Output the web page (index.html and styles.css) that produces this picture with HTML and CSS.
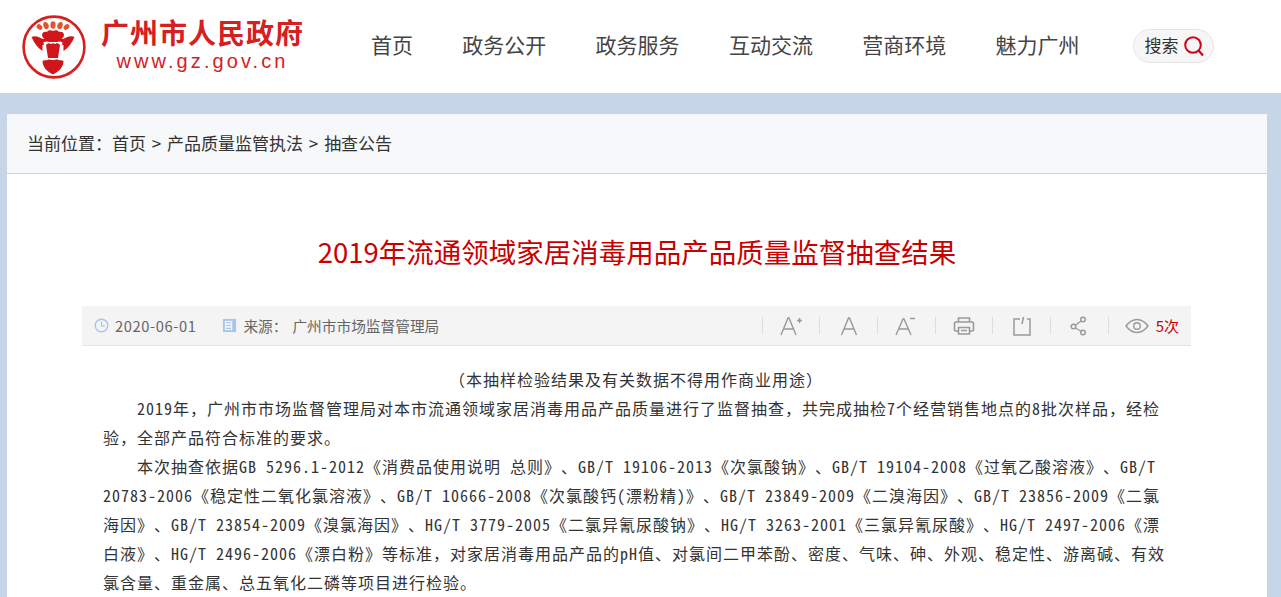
FILE: index.html
```html
<!DOCTYPE html>
<html lang="zh-CN">
<head>
    <meta charset="UTF-8">
    <meta name="viewport" content="width=device-width, initial-scale=1.0">
    <title>2019年流通领域家居消毒用品产品质量监督抽查结果</title>
    <link rel="stylesheet" href="styles.css">
</head>
<body>
    <header class="top">
        <a class="logo" href="#">
            <svg class="emblem" viewBox="0 0 64 64" width="64" height="64">
                <circle cx="32" cy="32" r="30.4" fill="none" stroke="#d5201f" stroke-width="2.6"/>
                <g fill="#e0552c">
                    <ellipse cx="17.5" cy="12" rx="2.4" ry="3.2" transform="rotate(-50 17.5 12)"/>
                    <ellipse cx="24" cy="10.5" rx="2.6" ry="3.6" transform="rotate(-20 24 10.5)"/>
                    <ellipse cx="31" cy="10" rx="2.6" ry="3.8"/>
                    <ellipse cx="38" cy="10.5" rx="2.6" ry="3.6" transform="rotate(20 38 10.5)"/>
                    <ellipse cx="44.5" cy="12" rx="2.4" ry="3.2" transform="rotate(50 44.5 12)"/>
                </g>
                <g fill="#d0161a">
                    <path d="M20 20c0-3 3-4 5-3 1-2 4-2 6-1 2-1 5-1 6 1 2-1 5 0 5 3 0 2-2 4-4 5H24c-2-1-4-3-4-5z"/>
                    <path d="M9.5 22C14 20 18 23 21 24h20c3-1 7-4 11.5-2C50 28 46 33 41.5 36V30h-21v6C16 33 12 28 9.500 22z"/>
                    <path d="M20.5 46c2-1.500 3.500 0 5-1s3 0 5.500 0 4-1 5.500 0 3-.5 5 1c0 6-4.500 10.500-10.500 13.500C25 56.500 20.500 52 20.500 46z"/>
                </g>
                <path d="M21.5 27.500c2-1.500 4-1 5.500-.5h8c1.500-.5 3.500-1 5.500.5L38 44H24z" fill="#fff"/>
                <path d="M24 30c1.500-2 3.500-2 5-1 1.500-1 2.500-1 4 0 1.500-1 3.500-1 5 1l-2 13H26z" fill="#d0161a"/>
            </svg>
            <span class="logo-text">
                <strong>广州市人民政府</strong>
                <em>www.gz.gov.cn</em>
            </span>
        </a>
        <nav class="menu">
            <a href="#">首页</a>
            <a href="#">政务公开</a>
            <a href="#">政务服务</a>
            <a href="#">互动交流</a>
            <a href="#">营商环境</a>
            <a href="#">魅力广州</a>
        </nav>
        <div class="search">
            <span>搜索</span>
            <svg viewBox="0 0 22 22" width="22" height="22">
                <circle cx="10" cy="10" r="7.8" fill="none" stroke="#d0021b" stroke-width="2"/>
                <path d="M15.5 15.5l4.5 5" stroke="#d0021b" stroke-width="2.2" fill="none"/>
            </svg>
        </div>
    </header>

    <main class="card">
        <div class="crumbs">当前位置：<a href="#">首页</a> &gt; <a href="#">产品质量监管执法</a> &gt; <a href="#">抽查公告</a></div>

        <h1>2019年流通领域家居消毒用品产品质量监督抽查结果</h1>

        <div class="meta">
            <div class="meta-left">
                <svg viewBox="0 0 16 16" width="15" height="15">
                    <circle cx="8" cy="8" r="6.7" fill="none" stroke="#a9c3ea" stroke-width="1.5"/>
                    <path d="M8 4v4.500h3.500" fill="none" stroke="#a9c3ea" stroke-width="1.3"/>
                </svg>
                <span class="date">2020-06-01</span>
                <svg class="src-icon" viewBox="0 0 16 16" width="15" height="15">
                    <path d="M1 1h14v14H1z" fill="#a9c3ea"/>
                    <path d="M3 3h8v10H3z" fill="#eef2f9"/>
                    <path d="M4.500 5h5M4.500 8h5M4.500 11h5M13 3v10" stroke="#a9c3ea" stroke-width="1.2"/>
                </svg>
                <span class="src-label">来源：</span>
                <span>广州市市场监督管理局</span>
            </div>
            <div class="tools">
                <span class="tool">
                    <svg viewBox="0 0 24 20" width="24" height="20"><path d="M2 19L9 2h1l7 17M5 13h9" fill="none" stroke="#999" stroke-width="1.4"/><path d="M18 4.500h5M20.500 2v5" stroke="#999" stroke-width="1.5"/></svg>
                </span>
                <span class="tool">
                    <svg viewBox="0 0 18 20" width="18" height="20"><path d="M1.500 19L8.500 2h1l7 17M4.500 13h9" fill="none" stroke="#999" stroke-width="1.4"/></svg>
                </span>
                <span class="tool">
                    <svg viewBox="0 0 24 20" width="24" height="20"><path d="M2 19L9 3h1l7 16M5 13h9" fill="none" stroke="#999" stroke-width="1.4"/><path d="M16 2.500h5" stroke="#999" stroke-width="1.5"/></svg>
                </span>
                <span class="tool">
                    <svg viewBox="0 0 22 20" width="22" height="20"><path d="M5.500 6V2h11v4M5 15H2.500a1 1 0 0 1-1-1V7.500a1.500 1.500 0 0 1 1.500-1.500h16a1.500 1.500 0 0 1 1.500 1.500V14a1 1 0 0 1-1 1H17" fill="none" stroke="#999" stroke-width="1.6"/><path d="M5.500 11.500h11V18h-11zM8 14.500h6" fill="none" stroke="#999" stroke-width="1.6"/></svg>
                </span>
                <span class="tool">
                    <svg viewBox="0 0 20 20" width="20" height="20"><path d="M8 3H2v16h16V3h-3M10 8l1.500-7" fill="none" stroke="#999" stroke-width="1.5"/></svg>
                </span>
                <span class="tool">
                    <svg viewBox="0 0 18 20" width="18" height="20"><circle cx="13" cy="3.500" r="2.3" fill="none" stroke="#999" stroke-width="1.4"/><circle cx="3.500" cy="10.500" r="2.3" fill="none" stroke="#999" stroke-width="1.4"/><circle cx="13" cy="16.500" r="2.3" fill="none" stroke="#999" stroke-width="1.4"/><path d="M11.200 5L5.300 9.200M5.300 12l5.900 3.200" stroke="#999" stroke-width="1.3"/></svg>
                </span>
                <span class="views">
                    <svg viewBox="0 0 24 16" width="24" height="16"><path d="M1 8c3-4 7-6.500 11-6.500S20 4 23 8c-3 4-7 6.500-11 6.500S4 12 1 8z" fill="none" stroke="#999" stroke-width="1.4"/><circle cx="12" cy="8" r="3.3" fill="none" stroke="#999" stroke-width="1.4"/></svg>
                    <b>5次</b>
                </span>
            </div>
        </div>

        <article class="content">
            <p class="center">（本抽样检验结果及有关数据不得用作商业用途）</p>
            <p>2019年，广州市市场监督管理局对本市流通领域家居消毒用品产品质量进行了监督抽查，共完成抽检7个经营销售地点的8批次样品，经检验，全部产品符合标准的要求。</p>
            <p>本次抽查依据GB 5296.1-2012《消费品使用说明 总则》、GB/T 19106-2013《次氯酸钠》、GB/T 19104-2008《过氧乙酸溶液》、GB/T 20783-2006《稳定性二氧化氯溶液》、GB/T 10666-2008《次氯酸钙(漂粉精)》、GB/T 23849-2009《二溴海因》、GB/T 23856-2009《二氯海因》、GB/T 23854-2009《溴氯海因》、HG/T 3779-2005《二氯异氰尿酸钠》、HG/T 3263-2001《三氯异氰尿酸》、HG/T 2497-2006《漂白液》、HG/T 2496-2006《漂白粉》等标准，对家居消毒用品产品的pH值、对氯间二甲苯酚、密度、气味、砷、外观、稳定性、游离碱、有效氯含量、重金属、总五氧化二磷等项目进行检验。</p>
        </article>
    </main>
</body>
</html>
```

FILE: styles.css
```css
* {
    box-sizing: border-box;
}
html, body {
    height: 597px;
    overflow: hidden;
}
body {
    margin: 0;
    background: #c7d5e9;
    font-family: "Noto Sans CJK SC", sans-serif;
    color: #333;
}
a {
    color: inherit;
    text-decoration: none;
}
.top {
    height: 93px;
    background: #fff;
    display: flex;
    align-items: center;
}
.logo {
    display: flex;
    align-items: center;
    margin-left: 22px;
    width: 349px;
    color: #d5201f;
}
.emblem {
    flex: none;
}
.logo-text {
    display: flex;
    flex-direction: column;
    align-items: center;
    margin: -2px 0 0 15px;
    width: 203px;
}
.logo-text strong {
    font-size: 28px;
    line-height: 32px;
    letter-spacing: 1px;
    white-space: nowrap;
}
.logo-text em {
    font-family: "Liberation Sans", sans-serif;
    font-style: normal;
    font-size: 20px;
    line-height: 27px;
    letter-spacing: 3.1px;
}
.menu {
    display: flex;
    gap: 49.3px;
    margin-top: -6px;
    font-size: 21px;
    color: #444;
}
.search {
    margin: -1px 0 0 54px;
    width: 81px;
    height: 34px;
    border: 1px solid #e6e6e6;
    border-radius: 17px;
    background: #f6f6f6;
    display: flex;
    align-items: center;
    gap: 5px;
    padding-left: 10px;
    font-size: 17px;
}
.search span {
    line-height: 1;
    margin-top: -3px;
}
.card {
    margin: 21px 14px 0 7px;
    background: #fff;
    height: 483px;
}
.crumbs {
    height: 60px;
    background: #f6f8fa;
    border-bottom: 1px solid #c7d5e9;
    padding-left: 20px;
    font-size: 17px;
    line-height: 58px;
    word-spacing: 2px;
}
h1 {
    margin: 0;
    padding-top: 58px;
    height: 132px;
    text-align: center;
    font-size: 27.5px;
    line-height: 38px;
    font-weight: normal;
    color: #c80000;
}
.meta {
    margin: 0 76px 0 75px;
    height: 40px;
    background: #f4f4f4;
    border-bottom: 1px solid #e4e4e4;
    display: flex;
    align-items: center;
    justify-content: space-between;
    font-size: 14.7px;
    color: #666;
}
.meta-left {
    display: flex;
    align-items: center;
    padding-left: 12px;
}
.date {
    margin-left: 6px;
    letter-spacing: 0.6px;
}
.src-icon {
    margin-left: 26px;
}
.src-label {
    margin-left: 6px;
    width: 49px;
}
.tools {
    display: flex;
    align-items: center;
    padding-right: 12px;
}
.tool {
    width: 57.7px;
    height: 17px;
    border-left: 1px solid #ddd;
    display: flex;
    align-items: center;
    justify-content: center;
}
.views {
    height: 17px;
    border-left: 1px solid #ddd;
    padding-left: 16px;
    display: flex;
    align-items: center;
    gap: 7px;
}
.views b {
    font-weight: normal;
    color: #c80000;
    font-size: 15px;
}
.content {
    padding: 19px 98px 0 96px;
    font-family: "Noto Sans Mono CJK SC", "Noto Sans CJK SC", monospace;
    font-size: 16px;
    line-height: 29px;
    letter-spacing: 1px;
    font-weight: 300;
    color: #333;
    text-spacing-trim: space-all;
    font-feature-settings: "chws" 0, "halt" 0, "palt" 0;
}
.content p {
    margin: 0;
    text-indent: 34px;
}
.content p.center {
    text-indent: 0;
    text-align: center;
}
```
